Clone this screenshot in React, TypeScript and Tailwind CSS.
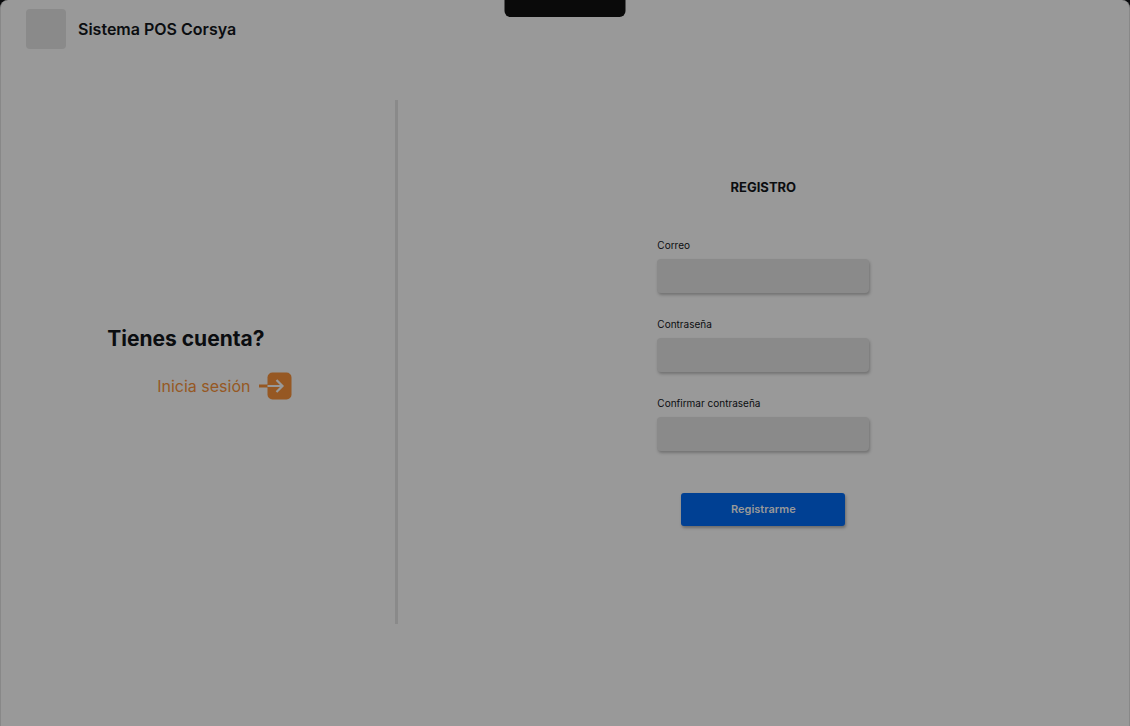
import React from "react";

type FieldProps = { id: string; label: string; type: string };

function Field({ id, label, type }: FieldProps) {
  return (
    <div className="flex flex-col gap-1.5">
      <label htmlFor={id} className="text-[10px] leading-4 text-[#0b0d10]">
        {label}
      </label>
      <input
        id={id}
        type={type}
        className="h-[34px] rounded bg-[#8a8a8a] px-3 text-sm text-[#0b0d10] shadow-[1px_2px_3px_rgba(0,0,0,0.25)] outline-none"
      />
    </div>
  );
}

function EnterIcon() {
  return (
    <svg width="34" height="28" viewBox="0 0 34 28" fill="none" aria-hidden="true">
      <rect x="9.500" y="0.500" width="24" height="27" rx="5" fill="#965823" />
      <path d="M1 14H10" stroke="#965823" strokeWidth="3" />
      <path d="M9.500 14H24M18.500 8L24.500 14L18.500 20" stroke="#999999" strokeWidth="2.200" />
    </svg>
  );
}

export default function App() {
  return (
    <div className="min-h-screen bg-[#08090b] font-['Inter',sans-serif]">
      <div className="relative flex min-h-screen flex-col rounded-t-lg border-l border-r border-[#888888] bg-[#999999]">
        <div className="absolute left-1/2 top-0 h-[17px] w-[121px] -translate-x-1/2 rounded-b-md bg-[#0a0a0a]" />
        <header className="flex items-center gap-3 px-[25px] pt-[9px]">
          <div className="size-10 rounded bg-[#8a8a8a]" />
          <h1 className="text-base font-semibold text-[#0b0d10]">Sistema POS Corsya</h1>
        </header>
        <main className="flex flex-1 pb-[102px] pt-[51px]">
          <section className="flex w-[34.9%] flex-col items-center justify-center">
            <div className="flex flex-col gap-[19px] pl-1">
              <h2 className="pr-7 text-[21px] leading-7 font-bold text-[#0b0d10]">Tienes cuenta?</h2>
              <a href="#inicia-sesion" className="flex items-center justify-end gap-2 text-base text-[#965823]">
                Inicia sesión
                <EnterIcon />
              </a>
            </div>
          </section>
          <div className="w-[3px] bg-[#8a8a8a]" />
          <section className="flex flex-1 flex-col items-center justify-center pb-5">
            <form className="flex w-[212px] flex-col" onSubmit={(e) => e.preventDefault()}>
              <h2 className="mb-[42px] text-center text-[13px] leading-4 font-bold text-[#0b0d10]">REGISTRO</h2>
              <div className="flex flex-col gap-[23px]">
                <Field id="correo" label="Correo" type="email" />
                <Field id="contrasena" label="Contraseña" type="password" />
                <Field id="confirmar" label="Confirmar contraseña" type="password" />
              </div>
              <button
                type="submit"
                className="mx-6 mt-[42px] h-[33px] rounded-[3px] bg-[#004093] text-[11px] font-semibold text-[#999999] shadow-[1px_2px_3px_rgba(0,0,0,0.3)]"
              >
                Registrarme
              </button>
            </form>
          </section>
        </main>
      </div>
    </div>
  );
}
